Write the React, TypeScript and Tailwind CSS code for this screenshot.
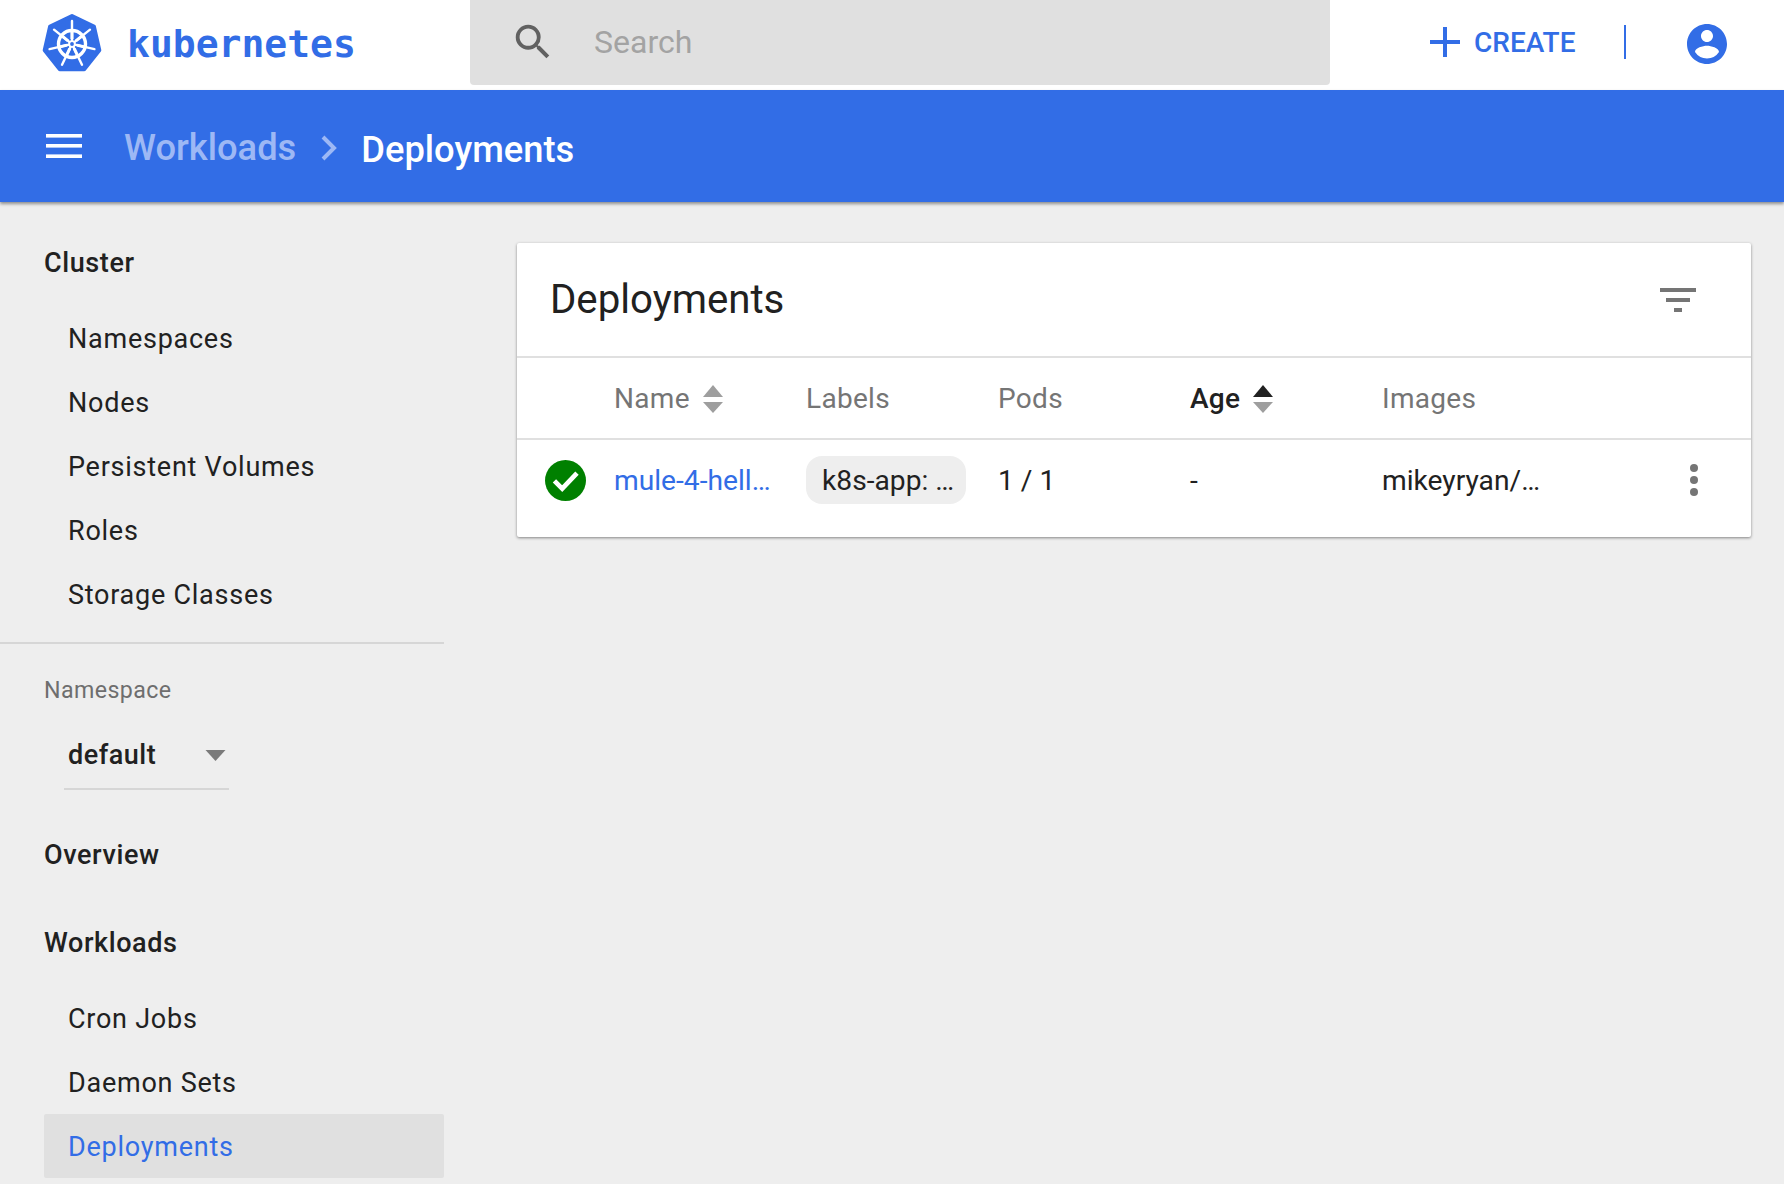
import React from "react";

const font = { fontFamily: "Roboto, sans-serif" };

function Helm() {
  const spokes = [0, 1, 2, 3, 4, 5, 6].map((k) => {
    const a = ((-90 + (k * 360) / 7) * Math.PI) / 180;
    return { c: Math.cos(a), s: Math.sin(a) };
  });
  return (
    <svg viewBox="0 0 60 60" className="w-[60px] h-[60px] shrink-0">
      <polygon
        points="30,3 51.9,13.5 57.3,37.2 42.2,56.2 17.8,56.2 2.7,37.2 8.1,13.5"
        fill="#326de6"
        stroke="#326de6"
        strokeWidth="4"
        strokeLinejoin="round"
      />
      <circle cx="30" cy="31" r="13.5" fill="none" stroke="#fff" strokeWidth="3.4" />
      {spokes.map((p, i) => (
        <line key={i} x1={30 + p.c * 3} y1={31 + p.s * 3} x2={30 + p.c * 23} y2={31 + p.s * 23} stroke="#fff" strokeWidth="2.4" strokeLinecap="round" />
      ))}
      {spokes.map((p, i) => (
        <line key={"w" + i} x1={30 + p.c * 5} y1={31 + p.s * 5} x2={30 + p.c * 12} y2={31 + p.s * 12} stroke="#fff" strokeWidth="3" />
      ))}
      <circle cx="30" cy="31" r="3.8" fill="#fff" />
      <circle cx="30" cy="31" r="1.9" fill="#326de6" />
    </svg>
  );
}

function Sort({ active }: { active?: boolean }) {
  return (
    <svg viewBox="0 0 20 28" className="w-[20px] h-[28px] ml-[13px]">
      <polygon points="10,0 20,12 0,12" fill={active ? "#212121" : "#9e9e9e"} />
      <polygon points="0,17 20,17 10,28" fill="#9e9e9e" />
    </svg>
  );
}

function Group({ children, className = "" }: { children: React.ReactNode; className?: string }) {
  return <div className={"h-[64px] pl-[44px] flex items-center text-[27px] font-medium text-[#212121] tracking-[0.6px] " + className}>{children}</div>;
}

function Item({ children, active, low }: { children: React.ReactNode; active?: boolean; low?: boolean }) {
  return (
    <div className={"h-[64px] ml-[44px] pl-[24px] flex items-center text-[27px] tracking-[0.75px] " + (low ? "pt-[2px] " : "") + (active ? "bg-[#e0e0e0] text-[#326de6] rounded-[2px]" : "text-[#212121]")}>
      {children}
    </div>
  );
}

export default function App() {
  return (
    <div className="w-[1784px] h-[1184px] overflow-hidden bg-[#eeeeee] flex flex-col" style={font}>
      <header className="h-[90px] shrink-0 bg-white flex items-center">
        <div className="w-[470px] shrink-0 flex items-center pl-[42px] gap-[25px] pb-[4px]">
          <Helm />
          <span className="text-[38px] font-bold text-[#326de6] leading-none mt-[2px]" style={{ fontFamily: '"DejaVu Sans Mono", monospace' }}>kubernetes</span>
        </div>
        <div className="w-[860px] h-[85px] self-start bg-[#e0e0e0] rounded-b-[4px] flex items-center pl-[40px] pb-[2px]">
          <svg viewBox="0 0 24 24" className="w-[46px] h-[46px] shrink-0" fill="#616161">
            <path d="M15.5 14h-.79l-.28-.27A6.47 6.47 0 0 0 16 9.5 6.5 6.5 0 1 0 9.5 16c1.61 0 3.09-.59 4.23-1.57l.27.28v.79l5 4.99L20.49 19l-4.99-5zm-6 0C7.01 14 5 11.99 5 9.5S7.01 5 9.5 5 14 7.01 14 9.5 11.99 14 9.5 14z" />
          </svg>
          <span className="ml-[38px] text-[32px] text-[#a3a3a3]">Search</span>
        </div>
        <div className="flex-1 flex items-center pl-[100px] pb-[6px]">
          <svg viewBox="0 0 30 30" className="w-[30px] h-[30px] shrink-0" fill="#326de6">
            <rect x="0" y="13" width="30" height="4" />
            <rect x="13" y="0" width="4" height="30" />
          </svg>
          <span className="ml-[14px] mt-[2px] text-[28px] font-medium text-[#326de6]">CREATE</span>
          <div className="ml-[49px] w-[2px] h-[34px] bg-[#326de6]" />
          <svg viewBox="2 2 20 20" className="ml-[61px] w-[40px] h-[40px] shrink-0 mt-[4px]" fill="#326de6">
            <path d="M12 2C6.48 2 2 6.48 2 12s4.48 10 10 10 10-4.48 10-10S17.52 2 12 2zm0 3c1.66 0 3 1.34 3 3s-1.34 3-3 3-3-1.34-3-3 1.34-3 3-3zm0 14.2a7.2 7.2 0 0 1-6-3.22c.03-1.99 4-3.08 6-3.08 1.99 0 5.97 1.09 6 3.08a7.2 7.2 0 0 1-6 3.22z" />
          </svg>
        </div>
      </header>
      <div className="h-[112px] shrink-0 bg-[#326de6] flex items-center shadow-[0_2px_3px_rgba(0,0,0,0.4)] relative pl-[46px]">
        <svg viewBox="0 0 36 24" className="w-[36px] h-[24px] shrink-0" fill="#fff">
          <rect y="0" width="36" height="3.6" />
          <rect y="10" width="36" height="3.6" />
          <rect y="20.4" width="36" height="3.6" />
        </svg>
        <span className="ml-[42px] text-[36.3px] font-medium text-[#9db8f5] mt-[4px]">Workloads</span>
        <svg viewBox="0 0 16 26" className="ml-[25px] w-[16px] h-[26px] mt-[4px]" fill="none" stroke="#9db8f5" strokeWidth="4">
          <path d="M2 2l11 11L2 24" />
        </svg>
        <span className="ml-[24px] text-[36.3px] font-medium text-white mt-[8px]">Deployments</span>
      </div>
      <div className="flex-1 flex min-h-0">
        <aside className="w-[444px] shrink-0 pt-[29px]">
          <Group className="mb-[12px]">Cluster</Group>
          <Item>Namespaces</Item>
          <Item>Nodes</Item>
          <Item>Persistent Volumes</Item>
          <Item>Roles</Item>
          <Item>Storage Classes</Item>
          <div className="mt-[15px] h-[2px] bg-[#d6d6d6]" />
          <div className="mt-[32px] pl-[44px] text-[23.2px] leading-[28px] text-[#6e6e6e] tracking-[0.4px]">Namespace</div>
          <div className="mt-[16px] ml-[64px] w-[165px] h-[70px] pt-[2px] border-b-2 border-[#d6d6d6] flex items-center justify-between pl-[4px] pr-[3px]">
            <span className="text-[27px] font-medium text-[#212121] tracking-[0.5px]">default</span>
            <svg viewBox="0 0 20 11" className="w-[21px] h-[11px]"><polygon points="0,0 20,0 10,11" fill="#7a7a7a" /></svg>
          </div>
          <Group className="mt-[33px]">Overview</Group>
          <Group className="mt-[24px] mb-[11px]">Workloads</Group>
          <Item low>Cron Jobs</Item>
          <Item low>Daemon Sets</Item>
          <Item active low>Deployments</Item>
        </aside>
        <main className="flex-1 pt-[41px] pl-[73px] pr-[33px]">
          <section className="bg-white rounded-[2px] shadow-[0_1px_3px_rgba(0,0,0,0.45)]">
            <div className="h-[115px] border-b-2 border-[#e0e0e0] flex items-center justify-between pl-[33px] pr-[55px]">
              <h1 className="text-[40.2px] text-[#212121] mt-[2px]">Deployments</h1>
              <svg viewBox="0 0 36 24" className="w-[36px] h-[24px]" fill="#757575">
                <rect y="0" width="36" height="4" />
                <rect x="6" y="10" width="24" height="4" />
                <rect x="14" y="20" width="8" height="4" />
              </svg>
            </div>
            <div className="h-[82px] pt-[2px] border-b-2 border-[#e0e0e0] grid grid-cols-[97px_192px_192px_192px_192px_1fr] items-center text-[28px] text-[#757575] tracking-[0.3px]">
              <div />
              <div className="flex items-center">Name<Sort /></div>
              <div>Labels</div>
              <div>Pods</div>
              <div className="flex items-center font-medium text-[#212121]">Age<Sort active /></div>
              <div>Images</div>
            </div>
            <div className="h-[97px] pb-[17px] grid grid-cols-[97px_192px_192px_192px_192px_1fr] items-center text-[28.2px] text-[#212121]">
              <div className="pl-[28px] flex">
                <svg viewBox="2 2 20 20" className="w-[41px] h-[41px]">
                  <circle cx="12" cy="12" r="10" fill="#008000" />
                  <path d="M6.6 12.2l3.8 3.8 7.2-7.6" fill="none" stroke="#fff" strokeWidth="2.3" />
                </svg>
              </div>
              <div className="text-[#326de6] pt-[2px]">mule-4-hell…</div>
              <div>
                <span className="inline-flex items-center h-[48px] w-[160px] pl-[16px] pt-[2px] rounded-[16px] bg-[#eeeeee]">k8s-app: …</span>
              </div>
              <div className="pt-[2px]">1 / 1</div>
              <div className="pt-[2px]">-</div>
              <div className="flex items-center justify-between pr-[53px]">
                <span className="pt-[2px]">mikeyryan/…</span>
                <svg viewBox="0 0 8 32" className="w-[8px] h-[32px]" fill="#757575">
                  <circle cx="4" cy="4" r="4" />
                  <circle cx="4" cy="16" r="4" />
                  <circle cx="4" cy="28" r="4" />
                </svg>
              </div>
            </div>
          </section>
        </main>
      </div>
    </div>
  );
}
